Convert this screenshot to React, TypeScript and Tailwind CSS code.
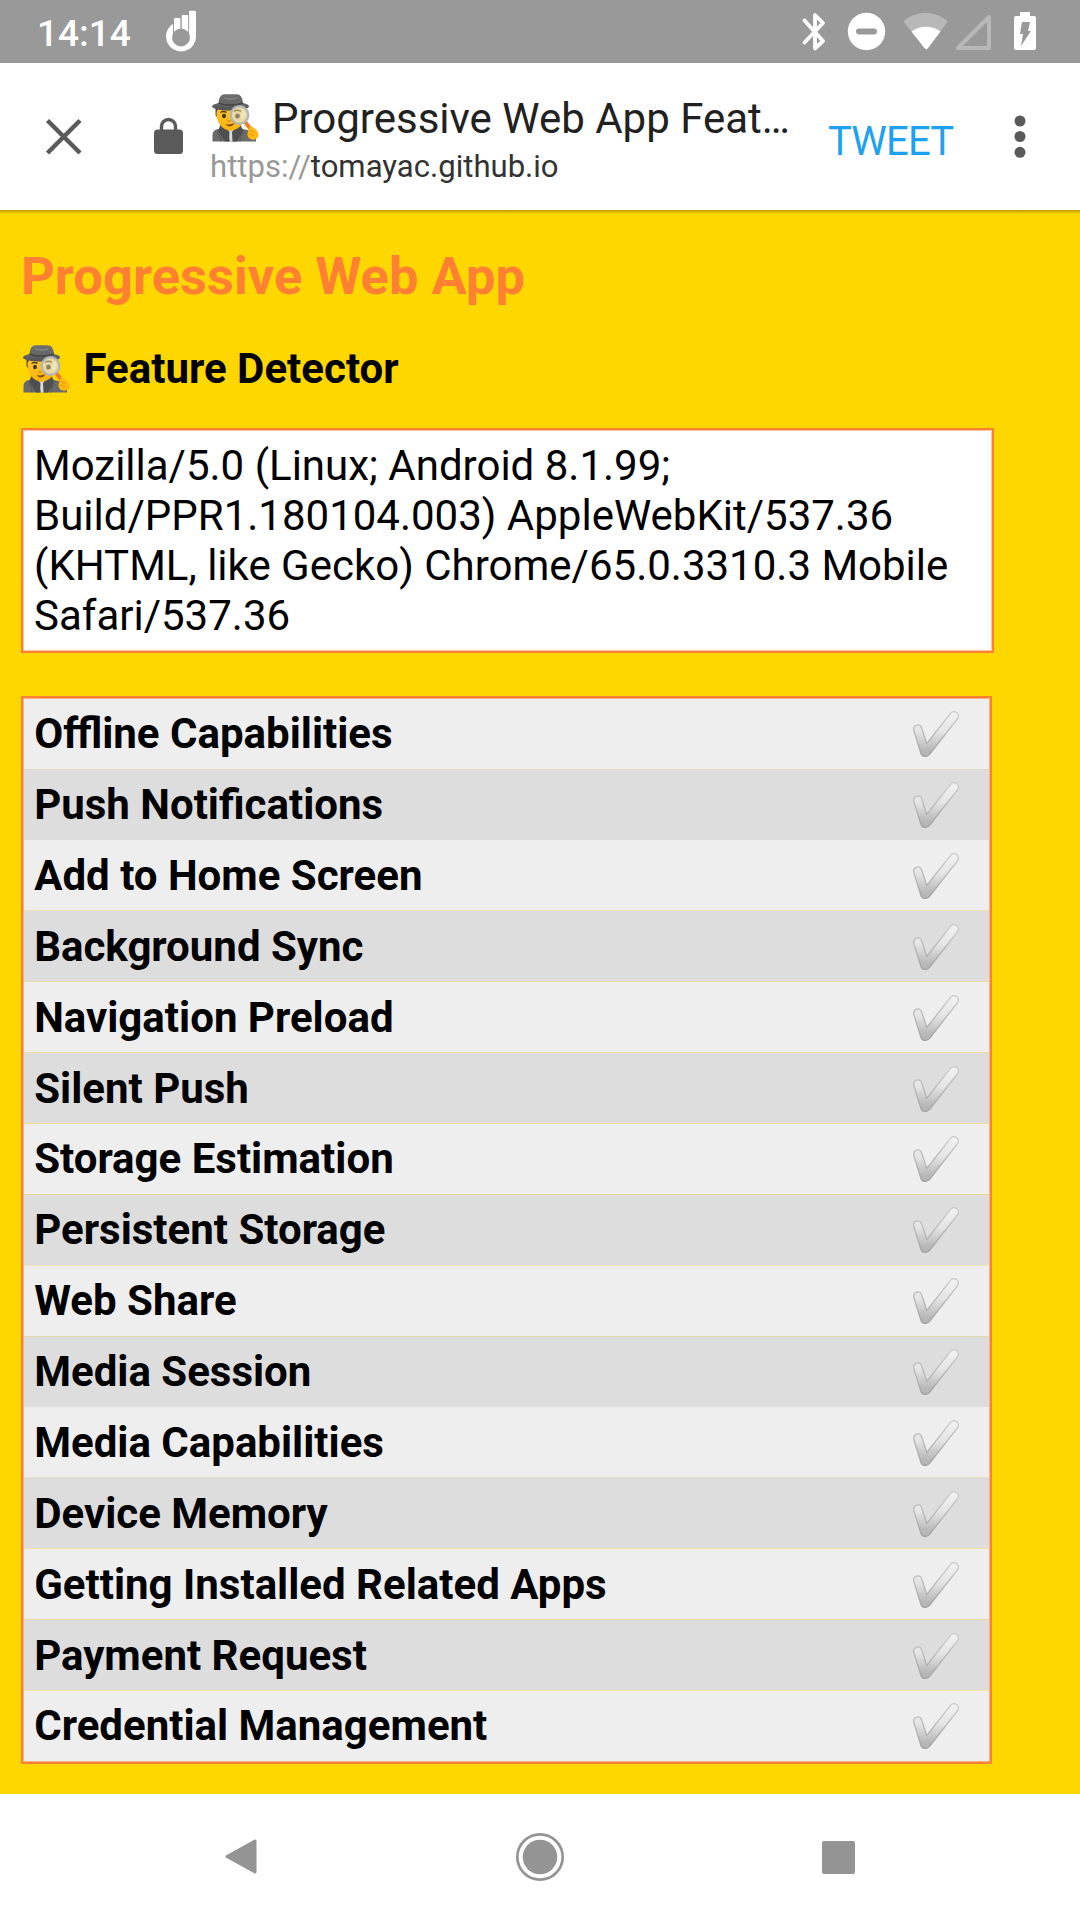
import React from "react";

const features = [
  { name: "Offline Capabilities", row: "h-[71px]", seam: "bg-[#ddd9c8]" },
  { name: "Push Notifications", row: "h-[70px]", seam: "bg-[#dddddd]" },
  { name: "Add to Home Screen", row: "h-[71px] pt-px", seam: "bg-[#ebe4bb]" },
  { name: "Background Sync", row: "h-[71px] pt-px", seam: "bg-[#e8dba8]" },
  { name: "Navigation Preload", row: "h-[71px] pt-px", seam: "bg-[#ecdf9f]" },
  { name: "Silent Push", row: "h-[71px] pt-px", seam: "bg-[#eedf9c]" },
  { name: "Storage Estimation", row: "h-[71px]", seam: "bg-[#e8da98]" },
  { name: "Persistent Storage", row: "h-[71px]", seam: "bg-[#efe6bb]" },
  { name: "Web Share", row: "h-[71px]", seam: "bg-[#e2d8ae]" },
  { name: "Media Session", row: "h-[70px]", seam: "bg-[#dddddd]" },
  { name: "Media Capabilities", row: "h-[71px] pt-px", seam: "bg-[#e4dfc8]" },
  { name: "Device Memory", row: "h-[71px] pt-px", seam: "bg-[#f0e2a8]" },
  { name: "Getting Installed Related Apps", row: "h-[71px] pt-px", seam: "bg-[#ebdd9e]" },
  { name: "Payment Request", row: "h-[71px] pt-px", seam: "bg-[#f2e5a4]" },
  { name: "Credential Management", row: "h-[70px]", seam: "bg-[#eeeeee]" },
];

function Detective({ className }: { className: string }) {
  return (
    <svg viewBox="0 0 47 48" className={className} aria-hidden="true">
      <defs>
        <linearGradient id="hat" x1="0" y1="0" x2="0" y2="1">
          <stop offset="0" stopColor="#6e6e6e" />
          <stop offset="0.6" stopColor="#666666" />
          <stop offset="1" stopColor="#505050" />
        </linearGradient>
        <linearGradient id="face" x1="0" y1="0" x2="0" y2="1">
          <stop offset="0" stopColor="#fdc62f" />
          <stop offset="1" stopColor="#fbb40c" />
        </linearGradient>
      </defs>
      <path d="M3.500 14h31v6l-3 6H6.500L3.500 21z" fill="#554138" />
      <path d="M.5 47.500V41c0-3.500 2-5.500 5.500-6l8-2h11l8 2.500c6 1 9 3.500 11 8v4z" fill="#6a6a6a" />
      <path d="M15 34h8l-2 13.500h-3z" fill="#dcdcdc" />
      <path d="M12.500 28h12v5l-6 4-6-4z" fill="#ef9f13" />
      <path d="M8.500 30.500l3 1 6 6.500-.5 9.500h-4L6 37zM28.500 30.500l-3 1-5.500 6.500.5 9.500H25L31 37z" fill="#4f4f4f" />
      <path d="M5 39c3 2 4 5 4 8.500M32 39c-3 2-4 5-4 8.500" stroke="#565656" fill="none" />
      <path d="M4.500 20c0-4 2-6 5-6h17c4 0 6 2 6 7 0 9-6.500 15.500-14 15.500S4.500 29 4.500 20z" fill="url(#face)" />
      <path d="M8.500 18.500c2-1.500 4-1.300 6 0" fill="none" stroke="#55412f" strokeWidth="1.500" />
      <ellipse cx="12" cy="22" rx="2" ry="2.300" fill="#42352e" />
      <path d="M13.500 30c3 1 6 0 9-1-2 4.500-7 4.500-9 1z" fill="#8b4d1d" />
      <path d="M15.500 26.500q2 1.300 3.500 0" stroke="#e6910c" strokeWidth="1.500" fill="none" />
      <path
        d="M6.500 9C7 3.500 9 .2 13 .2h11.500c4 0 6 3.300 6.500 8.800 4 .8 6 2 6 3.500 0 1.800-6.500 4-18.500 4S0 14.300 0 12.500C0 11 2.500 9.800 6.500 9z"
        fill="url(#hat)"
      />
      <path d="M6.500 9c6 2.700 18 2.700 24.500 0" stroke="#474747" strokeWidth="1.700" fill="none" />
      <path d="M12 3.500c3 2 10 2 13.500 0" stroke="#858585" strokeWidth="1.300" fill="none" />
      <path d="M33.500 28.500l5.500 7" stroke="#ef7d25" strokeWidth="3.800" strokeLinecap="round" />
      <circle cx="27.500" cy="21" r="8.500" fill="#e8d9a0" />
      <ellipse cx="25.500" cy="22" rx="2.300" ry="2.600" fill="#8f8167" />
      <path d="M22 17.500c2-1.500 5-1.500 7 0" stroke="#a08d67" strokeWidth="1.400" fill="none" />
      <path d="M30.500 15.500c2.500 1.500 3.500 4 3 7.500l-5 3z" fill="#f2eacb" fillOpacity=".75" />
      <circle cx="27.500" cy="21" r="8.800" fill="none" stroke="#b2b5b7" strokeWidth="2.200" />
      <path d="M37 34c1-2.800 4-2 4.200 0 3 .8 5.300 4 5.300 7 0 3.500-4 5.500-7.500 4.300-4-1.300-4.500-6.300-2-9.300z" fill="#fdb912" />
      <path d="M38 36.500l4.500 2M37 39.800l5 2" stroke="#e9980e" strokeWidth="1" />
    </svg>
  );
}

function Check() {
  return (
    <svg viewBox="0 0 46 46" className="mr-[30px] h-[46px] w-[46px]" aria-hidden="true">
      <defs>
        <linearGradient id="check" x1="0" y1="0" x2="0" y2="1">
          <stop offset="0" stopColor="#f2f2f2" />
          <stop offset="0.45" stopColor="#e4e4e4" />
          <stop offset="0.85" stopColor="#b9b9b9" />
          <stop offset="1" stopColor="#b3b3b3" />
        </linearGradient>
        <linearGradient id="edge" x1="0" y1="0" x2="0" y2="1">
          <stop offset="0" stopColor="#cdcdcd" />
          <stop offset="1" stopColor="#a2a2a2" />
        </linearGradient>
      </defs>
      <path
        d="M.8 19.500C-.3 13.500 7 12 8.600 16.800L13.800 32.500 37.500 2.300C41-1.800 47.300 2.600 44.800 7.300L16.800 43C14.500 46.500 9 46 8 42.500z"
        fill="url(#check)"
        stroke="url(#edge)"
        strokeWidth="1.300"
      />
    </svg>
  );
}

function StatusBar() {
  return (
    <header className="flex h-[63px] items-center bg-[#999999] text-white">
      <span className="ml-[37px] w-[96px] pt-[3px] text-[37px] leading-[63px] font-medium">14:14</span>
      <svg viewBox="0 0 32 44" className="ml-[32px] h-[44px] w-[32px]">
        <g fill="#fff">
          <path d="M8 13.800V25h16V2q0-1.200 1.200-1.200h4.600Q31 .8 31 2v25.500A15 15 0 1 1 8 13.800z" />
          <rect x="9" y="8" width="6.500" height="16" rx="1" />
          <rect x="16.700" y="5" width="6.600" height="18" rx="1" />
        </g>
        <path d="M8.500 8v13M16.100 8v10M23.800 4v16" stroke="#999" strokeWidth=".6" />
        <circle cx="16" cy="27.500" r="9" fill="#999" />
      </svg>
      <svg viewBox="0 0 280 63" className="ml-auto h-[63px] w-[280px]">
        <path d="M4.500 20.500L23 41l-8 7.500V15l8 8L4.500 42.500" fill="none" stroke="#fff" strokeWidth="3.800" strokeLinecap="round" strokeLinejoin="round" />
        <circle cx="66.500" cy="31.500" r="18.700" fill="#fff" />
        <rect x="56" y="28.500" width="21" height="6" rx="3" fill="#999" />
        <path d="M104 22.500c-.7-1 0-1.800.8-2.300 12-9.500 29-9.500 41.500 0 .9.600 1.200 1.300.6 2.200L128 48c-1.300 1.500-2 1.500-3.300 0z" fill="#b8b8b8" />
        <path d="M111.500 31.500c8-6.500 21-6.500 29 0L128 48c-1.500 1.600-2 1.600-3.500 0z" fill="#fff" />
        <path d="M189 17v31h-31z" fill="none" stroke="#b8b8b8" strokeWidth="4" strokeLinejoin="round" />
        <path d="M220 12h10v4h4q2 0 2 2v30q0 2-2 2h-18q-2 0-2-2V18q0-2 2-2h4z" fill="#fff" />
        <path d="M222 22h8l-2 9h3l-10 15 2-12h-3z" fill="#999" />
      </svg>
    </header>
  );
}

function Toolbar() {
  return (
    <div className="flex h-[147px] items-start bg-white">
      <svg viewBox="0 0 37 37" className="mt-[55px] ml-[45px] h-[37px] w-[37px]">
        <path d="M2.500 2.500l32.500 32.500M35 2.500L2.500 35" stroke="#5a5a5a" strokeWidth="4.500" />
      </svg>
      <svg viewBox="0 0 30 38" className="mt-[54px] ml-[72px] h-[38px] w-[30px]">
        <path d="M7.500 14V9.500a7 7 0 0 1 14 0V14" fill="none" stroke="#5a5a5a" strokeWidth="3.400" />
        <rect x="0" y="12.500" width="29" height="24.500" rx="3.500" fill="#5a5a5a" />
      </svg>
      <div className="ml-[26px] flex w-[618px] flex-col pt-[30px]">
        <div className="flex h-[50px] items-center pl-px text-[42px] text-[#212121]">
          <Detective className="mr-[13px] ml-[1px] h-[48px] w-[47px] shrink-0" />
          <span className="whitespace-nowrap">Progressive Web App Feat…</span>
        </div>
        <div className="h-[48px] text-[31.1px] leading-[48px] text-[#333333]">
          <span className="text-[#999999]">https://</span>tomayac.github.io
        </div>
      </div>
      <span className="mt-[55px] w-[125px] text-[40px] leading-[48px] tracking-[-0.8px] text-[#1da1f2]">TWEET</span>
      <svg viewBox="0 0 12 44" className="mt-[52px] ml-[61px] h-[44px] w-[12px]">
        <g fill="#5a5a5a">
          <circle cx="6" cy="6" r="5.500" />
          <circle cx="6" cy="21.500" r="5.500" />
          <circle cx="6" cy="37.300" r="5.500" />
        </g>
      </svg>
    </div>
  );
}

export default function App() {
  return (
    <div className="flex h-[1920px] w-[1080px] flex-col overflow-hidden bg-[#ffd700] font-[Roboto,sans-serif]">
      <StatusBar />
      <Toolbar />
      <main className="h-[1584px] pl-[21px]">
        <div className="-ml-[21px] h-[4px] bg-linear-to-b from-[#b89b00] to-[#ffd700]" />
        <h1 className="mt-[31px] h-[62px] text-[52.5px] leading-[62px] font-bold text-[#ff8033]">Progressive Web App</h1>
        <h2 className="mt-[37px] flex h-[50px] items-center text-[42px] leading-[50px] font-bold text-black">
          <Detective className="mr-[13.5px] ml-[2px] h-[48px] w-[47px]" />
          Feature Detector
        </h2>
        <div className="mt-[34px] h-[225px] w-[973px] border-2 border-[#ff8033] bg-white pt-[11px] pl-[11px] text-[42px] leading-[50px] text-black shadow-[inset_0_0_0_1px_#ffc4a0]">
          <p>Mozilla/5.0 (Linux; Android 8.1.99;</p>
          <p>Build/PPR1.180104.003) AppleWebKit/537.36</p>
          <p>(KHTML, like Gecko) Chrome/65.0.3310.3 Mobile</p>
          <p>Safari/537.36</p>
        </div>
        <ul className="mt-[43px] w-[971px] border-2 border-[#ff8033] bg-[#fbb27c] p-px">
          {features.map((f) => (
            <li key={f.name} className={`flex flex-col odd:bg-[#eeeeee] even:bg-[#dddddd] ${f.row}`}>
              <div className="flex min-h-0 flex-1 items-center justify-between pl-[10.2px] text-[42px] leading-[50px] font-bold text-black">
                <span>{f.name}</span>
                <Check />
              </div>
              <div className={`h-px ${f.seam}`} />
            </li>
          ))}
        </ul>
      </main>
      <nav className="flex h-[126px] items-center bg-white">
        <svg viewBox="0 0 34 36" className="ml-[225px] h-[36px] w-[34px]">
          <path d="M2 17.500L30 2v31z" fill="#949494" stroke="#949494" strokeWidth="3" strokeLinejoin="round" />
        </svg>
        <svg viewBox="0 0 50 50" className="ml-[255.500px] h-[50px] w-[50px]">
          <circle cx="25" cy="25" r="22.700" fill="none" stroke="#949494" strokeWidth="2.700" />
          <circle cx="25" cy="25" r="17.300" fill="#949494" />
        </svg>
        <div className="ml-[257.500px] h-[33px] w-[33px] rounded-[2px] bg-[#949494]" />
      </nav>
    </div>
  );
}
